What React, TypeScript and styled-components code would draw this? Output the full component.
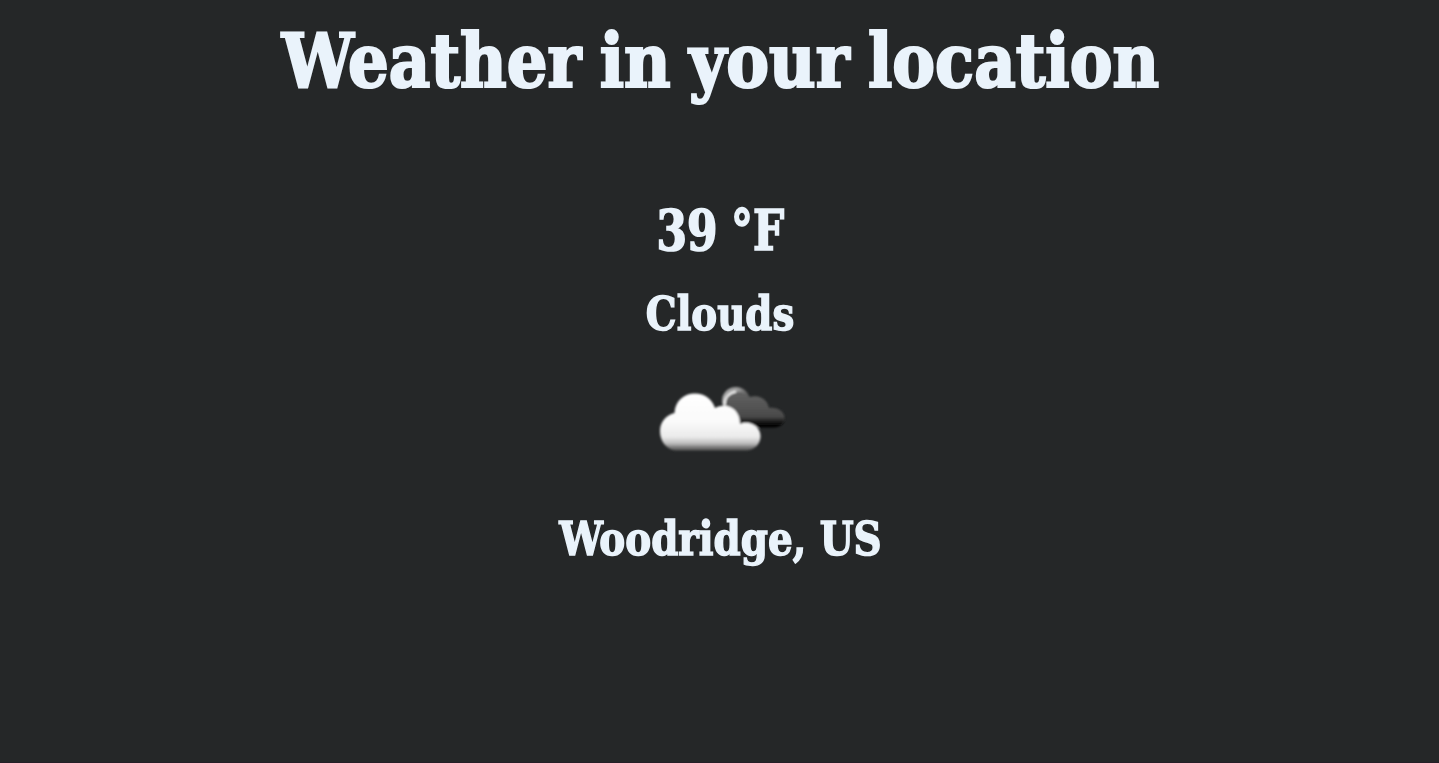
import React from "react";
import styled, { createGlobalStyle } from "styled-components";

const GlobalStyle = createGlobalStyle`
  html, body { margin: 0; background: #252728; }
`;

const Page = styled.main`
  box-sizing: border-box;
  height: 763px;
  overflow: hidden;
  display: flex;
  flex-direction: column;
  align-items: center;
  padding-left: 1px;
  background: #252728;
  border-bottom: 1px solid #251f27;
  color: #eaf3fb;
  font-family: "DejaVu Serif Condensed", "DejaVu Serif", serif;
  font-stretch: condensed;
  font-weight: 700;
`;

const Line = styled.div<{ $size: number; $height: number; $top?: number; $stretch: number; $gap?: number }>`
  margin: ${(p) => p.$top ?? 0}px 0 0;
  font-size: ${(p) => p.$size}px;
  line-height: ${(p) => p.$height}px;
  word-spacing: ${(p) => p.$gap ?? 0}px;
  white-space: nowrap;
  -webkit-text-stroke: 0.03em currentColor;
  transform: scaleX(${(p) => p.$stretch});
`;

const Icon = styled.svg`
  display: block;
  flex: none;
  width: 160px;
  height: 100px;
  margin-top: 21px;
`;

const CloudIcon = () => (
  <Icon viewBox="0 0 160 100" aria-label="Clouds">
    <defs>
      <linearGradient id="front" gradientUnits="userSpaceOnUse" x1="0" y1="23" x2="0" y2="81">
        <stop offset="0" stopColor="#fff" />
        <stop offset="0.5" stopColor="#fafafa" />
        <stop offset="0.76" stopColor="#eaeaea" />
        <stop offset="0.87" stopColor="#bbb" />
        <stop offset="0.94" stopColor="#777" />
        <stop offset="1" stopColor="#505050" />
      </linearGradient>
      <linearGradient id="back" gradientUnits="userSpaceOnUse" x1="0" y1="20" x2="0" y2="58">
        <stop offset="0" stopColor="#656565" />
        <stop offset="0.7" stopColor="#4a4a4a" />
        <stop offset="0.88" stopColor="#0a0a0a" />
        <stop offset="1" stopColor="#000" />
      </linearGradient>
      <linearGradient id="rim" gradientUnits="userSpaceOnUse" x1="83" y1="28" x2="110" y2="22">
        <stop offset="0" stopColor="#aaa" />
        <stop offset="0.6" stopColor="#999" />
        <stop offset="1" stopColor="#444" />
      </linearGradient>
      <filter id="soft" x="-10%" y="-10%" width="120%" height="120%">
        <feGaussianBlur stdDeviation="0.9" />
      </filter>
    </defs>
    <g filter="url(#soft)">
      <circle cx="96" cy="31" r="14" fill="url(#rim)" />
      <path fill="url(#back)" d="M86 32 C87 25 92 22 98 22 C103 22 107 24 109 27 C119 24 127 29 129 38 C138 37 144.5 42 144.5 48 C144.5 54 140 57.5 134 57.5 H100 L86 40 Z" />
      <path fill="none" stroke="#f2f2f2" strokeWidth="1.8" d="M84.5 35 C84.5 28 89 23 96 21.5" />
      <path fill="url(#front)" d="M35 80.5 C26 79 20 71 20 61 C20 52 26 45 34.5 43 C35 31 44 23.5 55 23.5 C65 23.5 72 29 75 38 C87 32 100 39 100 54 C110 50 120.5 57 120.5 66 C120.5 74 115 79.5 107 80.5 Z" />
    </g>
  </Icon>
);

export default function App() {
  return (
    <Page>
      <GlobalStyle />
      <Line as="h1" $size={74} $height={122} $stretch={0.963} $gap={-4}>Weather in your location</Line>
      <Line as="h2" $size={56} $height={80} $top={68} $stretch={0.87} $gap={-2}>39 °F</Line>
      <Line as="h3" $size={47} $height={70} $top={9} $stretch={0.916}>Clouds</Line>
      <CloudIcon />
      <Line as="h3" $size={47} $height={70} $top={34} $stretch={0.919} $gap={0}>Woodridge, US</Line>
    </Page>
  );
}
